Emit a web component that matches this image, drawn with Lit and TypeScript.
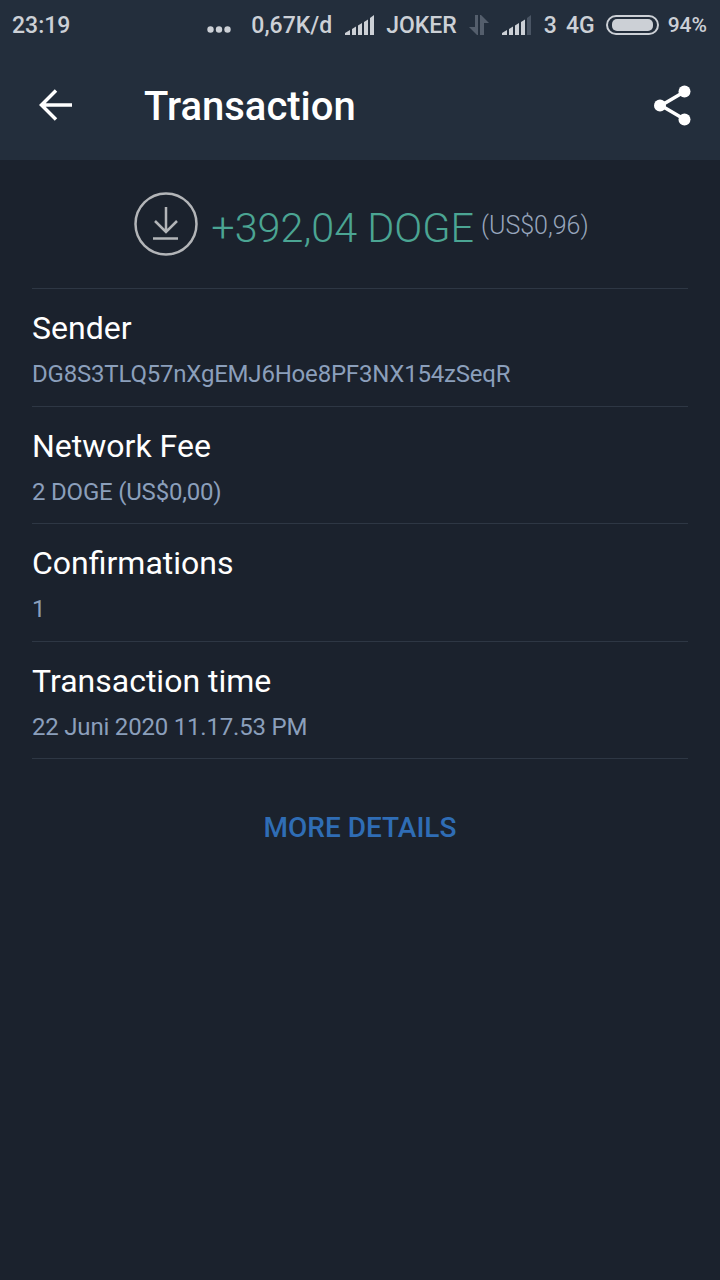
import { LitElement, css, html } from 'lit'
import { customElement } from 'lit/decorators.js'

const rows = [
	{ label: 'Sender', value: 'DG8S3TLQ57nXgEMJ6Hoe8PF3NX154zSeqR' },
	{ label: 'Network Fee', value: '2 DOGE (US$0,00)' },
	{ label: 'Confirmations', value: '1' },
	{ label: 'Transaction time', value: '22 Juni 2020 11.17.53 PM' },
]

@customElement('app-root')
export class AppRoot extends LitElement {
	static styles = css`
		:host {
			display: block;
			width: 720px;
			height: 1280px;
			background: #1b222d;
			font-family: Roboto, 'Liberation Sans', sans-serif;
			overflow: hidden;
		}

		.top {
			background: #232e3c;
			height: 160px;
		}

		.status {
			height: 50px;
			display: flex;
			align-items: center;
			padding: 0 13px 0 12px;
			color: #ccd0d6;
			font-size: 23px;
			font-weight: 500;
		}

		.status .time {
			flex: 1;
		}

		.status .dots {
			margin: 8px 20px 0 0;
		}

		.status .speed {
			margin-right: 13px;
		}

		.status .carrier {
			margin: 0 12px 0 11px;
		}

		.status .arrows {
			margin-right: 13px;
		}

		.status .sim {
			margin: 0 9px 0 12px;
		}

		.status .battery {
			margin: 0 9px 0 11px;
		}

		.status .level {
			font-size: 21px;
		}

		.status svg {
			display: block;
		}

		.toolbar {
			height: 110px;
			display: flex;
			align-items: center;
			padding: 0 29px 0 39px;
		}

		.toolbar h1 {
			flex: 1;
			margin: 2px 0 0 72px;
			font-size: 40px;
			font-weight: 500;
			color: #fff;
		}

		.amount {
			height: 128px;
			display: flex;
			align-items: center;
			justify-content: center;
			gap: 13px;
			padding-left: 3px;
		}

		.amount .value {
			font-size: 41.3px;
			font-weight: 300;
			color: #4ba593;
			margin-top: 8px;
		}

		.amount .fiat {
			font-size: 25px;
			font-weight: 300;
			color: #98a6bc;
			margin: 2px 0 0 -6px;
		}

		.rows {
			margin: 0 32px;
			border-top: 1px solid #2e3744;
		}

		.row {
			height: 117.5px;
			box-sizing: border-box;
			padding-top: 20px;
			border-bottom: 1px solid #2e3744;
		}

		.row .label {
			font-size: 32px;
			line-height: 38px;
			color: #fff;
		}

		.row .value {
			margin-top: 12px;
			font-size: 24px;
			letter-spacing: -0.2px;
			line-height: 30px;
			color: #8b9fbb;
		}

		.more {
			margin-top: 52px;
			text-align: center;
			font-size: 28px;
			font-weight: 500;
			line-height: 34px;
			color: #2f6db5;
		}
	`

	private signal(lastDim: boolean) {
		return html`<svg width="30" height="20" viewBox="0 0 30 20">
			<path d="M0 20v-2l5-3v5zM7 20v-6l4-2.5V20zM13 20V10.500l4-2.500V20zM19 20V7l4-2.500V20z" fill="#ccd0d6" />
			<path d="M25 20V3l4-3v20z" fill=${lastDim ? '#4a5564' : '#ccd0d6'} />
		</svg>`
	}

	render() {
		return html`
			<div class="top">
				<div class="status">
					<span class="time">23:19</span>
					<svg class="dots" width="24" height="7" viewBox="0 0 24 7">
						<circle cx="3.500" cy="3.500" r="3.200" fill="#ccd0d6" />
						<circle cx="12" cy="3.500" r="3.200" fill="#ccd0d6" />
						<circle cx="20.500" cy="3.500" r="3.200" fill="#ccd0d6" />
					</svg>
					<span class="speed">0,67K/d</span>
					${this.signal(false)}
					<span class="carrier">JOKER</span>
					<svg class="arrows" width="20" height="20" viewBox="0 0 20 20">
						<path d="M6 0h3v20H8l-8-8h6z" fill="#545e6c" />
						<path d="M11 20V0h1l8 8h-5v12z" fill="#545e6c" />
					</svg>
					${this.signal(true)}
					<span class="sim">3</span>
					<span>4G</span>
					<svg class="battery" width="53" height="20" viewBox="0 0 53 20">
						<rect x="1" y="1" width="51" height="18" rx="9" fill="none" stroke="#ccd0d6" stroke-width="2" />
						<rect x="6" y="4" width="41" height="12" rx="5" fill="#ccd0d6" />
					</svg>
					<span class="level">94%</span>
				</div>
				<div class="toolbar">
					<svg width="33" height="32" viewBox="0 0 33 32">
						<path d="M33 16H3M17 1.500 2.500 16 17 30.500" fill="none" stroke="#fff" stroke-width="3.500" />
					</svg>
					<h1>Transaction</h1>
					<svg width="37" height="41" viewBox="0 0 37 41">
						<path d="M30 7 7 20.500 30 34" fill="none" stroke="#fff" stroke-width="3.500" />
						<circle cx="30.500" cy="6.500" r="6" fill="#fff" />
						<circle cx="6" cy="20.500" r="6" fill="#fff" />
						<circle cx="30.500" cy="34.500" r="6" fill="#fff" />
					</svg>
				</div>
			</div>
			<div class="amount">
				<svg width="64" height="64" viewBox="0 0 64 64">
					<circle cx="32" cy="32" r="30.500" fill="none" stroke="#b3b5b8" stroke-width="2.500" />
					<path d="M32 15v25M21 29l11 11 11-11M19 46.500h25" fill="none" stroke="#b3b5b8" stroke-width="2.500" />
				</svg>
				<span class="value">+392,04 DOGE</span>
				<span class="fiat">(US$0,96)</span>
			</div>
			<div class="rows">
				${rows.map(
					(r) => html`<div class="row">
						<div class="label">${r.label}</div>
						<div class="value">${r.value}</div>
					</div>`,
				)}
			</div>
			<div class="more">MORE DETAILS</div>
		`
	}
}
